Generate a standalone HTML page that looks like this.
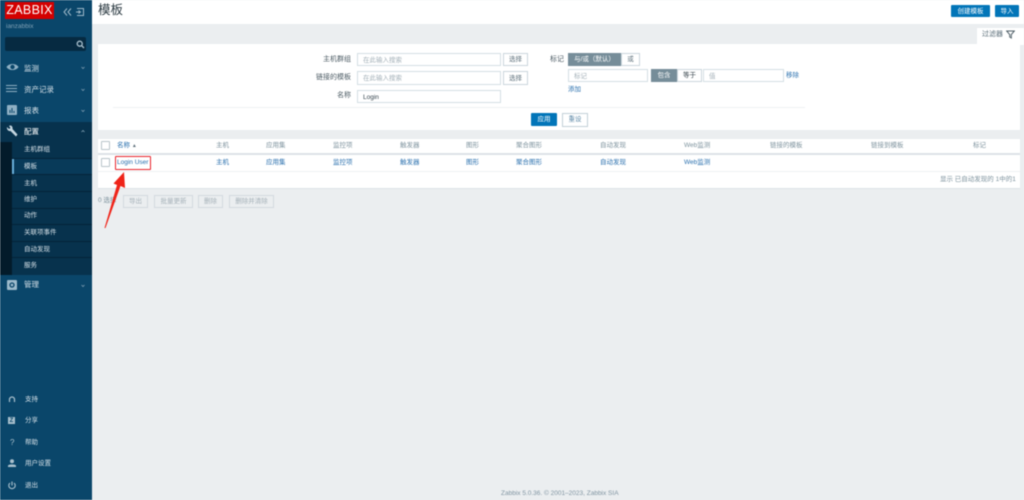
<!DOCTYPE html>
<html lang="zh"><head><meta charset="utf-8"><title>模板</title>
<style>
html,body{margin:0;padding:0}
body{width:1024px;height:500px;position:relative;overflow:hidden;background:#ebeef0;font-family:"Liberation Sans","Noto Sans CJK SC",sans-serif;font-size:7px;color:#1f2c33}
#r{position:absolute;inset:0;filter:blur(.4px)}
#r div,#r svg,#r span.a{position:absolute}
.t{white-space:nowrap;line-height:10px;margin-top:1px}
.w{color:#d5e0e7;font-size:6.5px}
.m{font-size:7.5px}
.l{color:#2a70ae}
.g{color:#7d929d}
.i{background:#fff;border:1px solid #d5dfe4;box-sizing:border-box;color:#a3b0b8;padding-left:5px;line-height:13px;font-size:6.5px;white-space:nowrap}
.b{background:#fff;border:1px solid #cbd6dc;box-sizing:border-box;text-align:center;color:#5c6f7a;font-size:6.5px;white-space:nowrap}
.d{background:#ebeef0;border:1px solid #d3dadf;box-sizing:border-box;text-align:center;color:#a5b1b8;font-size:6.5px;line-height:12px;white-space:nowrap}
.p{background:#0275b8;color:#fff;text-align:center;font-size:6.5px;line-height:13px;border-radius:1px;white-space:nowrap}
.c{background:#fff;border:1px solid #b9c4ca;box-sizing:border-box;width:9px;height:9px;border-radius:1px}
</style></head><body><div id="r">

<div style="left:0;top:0;width:92px;height:500px;background:#0a466a"></div>
<div style="left:5px;top:2px;width:49px;height:17px;background:#d40000"></div>
<div class="t" style="left:5px;top:2px;width:49px;height:17px;line-height:17px;text-align:center;color:#fff;font-size:12.5px;letter-spacing:.3px;margin-top:0">ZABBIX</div>
<svg style="left:63px;top:8px" width="9" height="8" fill="none" stroke="#9fb9c9" stroke-width="1"><path d="M4 .5 1 4l3 3.500M8 .5 5 4l3 3.500"/></svg>
<svg style="left:75px;top:7px" width="10" height="10" viewBox="0 0 10 10" fill="none" stroke="#9fb9c9"><path d="M2 1.500h6.500v7H2M1 5h4M3.500 3.500 5.500 5 3.500 6.500"/></svg>
<div class="t" style="left:6px;top:21px;color:#7fa0b5;font-size:6.500px">ianzabbix</div>
<div style="left:5px;top:37px;width:81px;height:14px;background:#062a41;border-radius:2px"></div>
<svg style="left:76px;top:40px" width="9" height="9" viewBox="0 0 9 9" fill="none" stroke="#a9c0cd" stroke-width="1.300"><circle cx="3.700" cy="3.700" r="2.500"/><path d="M5.500 5.500 8 8"/></svg>

<svg style="left:6px;top:62px" width="13" height="10" viewBox="0 0 13 10"><path d="M.5 5C3 1 10 1 12.500 5 10 9 3 9 .5 5Z" fill="#8fb0c4"/><circle cx="6.500" cy="5" r="2.200" fill="#0a466a"/></svg>
<div class="t w m" style="left:24px;top:63px">监测</div>
<svg style="left:6px;top:84px" width="11" height="9" viewBox="0 0 11 9" stroke="#8fb0c4"><path d="M0 1.500h11M0 4.500h11M0 7.500h11"/></svg>
<div class="t w m" style="left:24px;top:84px">资产记录</div>
<div style="left:7px;top:105px;width:10px;height:10px;background:#8fb0c4;border-radius:1px"></div>
<svg style="left:7px;top:105px" width="10" height="10" stroke="#0a466a"><path d="M3 8V5M5 8V3M7 8V6"/></svg>
<div class="t w m" style="left:24px;top:105px">报表</div>
<div style="left:0;top:122px;width:92px;height:20px;background:#07324d"></div>
<svg style="left:6px;top:125px" width="12" height="12" viewBox="0 0 12 12"><path d="M1 2 3 4 4.500 3 3 1C5-.5 7 1.500 6.500 4L11.500 9.500 10 11.500 4.500 6C2.500 6.500.5 4.500 1 2Z" fill="#c5d6e0"/></svg>
<div class="t m" style="left:24px;top:126px;color:#fff">配置</div>
<div style="left:0;top:142px;width:12px;height:133px;background:#031b2a"></div>
<div style="left:12px;top:142px;width:80px;height:133px;background:#07324d"></div>
<div style="left:13px;top:158px;width:79px;height:16px;background:#083a59"></div>
<div style="left:12px;top:158px;width:1.500px;height:16px;background:#69b0dc"></div>
<div style="left:12px;top:158px;width:80px;height:.7px;background:#042338"></div>
<div style="left:12px;top:174px;width:80px;height:.7px;background:#042338"></div>
<div style="left:12px;top:191px;width:80px;height:.7px;background:#042338"></div>
<div style="left:12px;top:208px;width:80px;height:.7px;background:#042338"></div>
<div style="left:12px;top:224px;width:80px;height:.7px;background:#042338"></div>
<div style="left:12px;top:241px;width:80px;height:.7px;background:#042338"></div>
<div style="left:12px;top:257px;width:80px;height:.7px;background:#042338"></div>
<div class="t w" style="left:24px;top:144px">主机群组</div>
<div class="t w" style="left:24px;top:161px">模板</div>
<div class="t w" style="left:24px;top:178px">主机</div>
<div class="t w" style="left:24px;top:194px">维护</div>
<div class="t w" style="left:24px;top:210px">动作</div>
<div class="t w" style="left:24px;top:227px">关联项事件</div>
<div class="t w" style="left:24px;top:244px">自动发现</div>
<div class="t w" style="left:24px;top:260px">服务</div>
<div style="left:7px;top:280px;width:10px;height:10px;background:#9cbacb;border-radius:1px"></div>
<svg style="left:7px;top:280px" width="10" height="10"><circle cx="5" cy="5" r="2" fill="none" stroke="#0a466a" stroke-width="1.300"/></svg>
<div class="t w m" style="left:24px;top:279px">管理</div>
<svg style="left:80px;top:65px" width="7" height="230" fill="none" stroke="#7d9db1" stroke-width=".8"><path d="M1.500 2 3 3.500 4.500 2M1.500 24 3 25.500 4.500 24M1.500 45 3 46.500 4.500 45M1.500 67 3 65.500 4.500 67M1.500 220 3 221.500 4.500 220"/></svg>

<svg style="left:8px;top:396px" width="8" height="9" fill="none" stroke="#a9c0cd" stroke-width="1.200"><path d="M1.500 6V3.500a2.500 2.500 0 0 1 5 0V6"/></svg>
<div class="t w" style="left:25px;top:394px">支持</div>
<div style="left:8px;top:417px;width:7px;height:7px;background:#a9c0cd"></div>
<div class="t" style="left:8px;top:415px;width:7px;text-align:center;color:#0a466a;font-size:6px;font-weight:bold">Z</div>
<div class="t w" style="left:25px;top:415px">分享</div>
<div class="t" style="left:10px;top:437px;color:#a9c0cd;font-size:8px">?</div>
<div class="t w" style="left:25px;top:437px">帮助</div>
<svg style="left:8px;top:459px" width="8" height="8" fill="#a9c0cd"><circle cx="4" cy="2.200" r="2"/><path d="M0 8V6.500C1 5 7 5 8 6.500V8Z"/></svg>
<div class="t w" style="left:25px;top:458px">用户设置</div>
<svg style="left:8px;top:481px" width="8" height="9" fill="none" stroke="#a9c0cd" stroke-width="1.100"><path d="M4 .5V4.500M2 2A3.200 3.200 0 1 0 6 2"/></svg>
<div class="t w" style="left:25px;top:480px">退出</div>

<div style="left:92px;top:0;width:932px;height:24px;background:#fff"></div>
<div class="t" style="left:98px;top:2px;font-size:12.500px;line-height:16px;color:#2b3a42;margin-top:0">模板</div>
<div class="p" style="left:951px;top:5px;width:39px;height:12px">创建模板</div>
<div class="p" style="left:995px;top:5px;width:24px;height:12px">导入</div>

<div style="left:977px;top:28px;width:47px;height:17px;background:#fff"></div>
<div class="t" style="left:982px;top:29px;color:#5c6f7a">过滤器</div>
<svg style="left:1006px;top:30px" width="9" height="9" fill="none" stroke="#4f5f68" stroke-width="1"><path d="M.7 1H8.300L5.300 4.500V8L3.700 7V4.500Z"/></svg>

<div style="left:98px;top:44px;width:922px;height:86px;background:#fff"></div>
<div class="t g" style="left:300px;top:54px;width:51px;text-align:right;color:#4c5b64">主机群组</div>
<div class="i" style="left:357px;top:53px;width:144px;height:13px">在此输入搜索</div>
<div class="b" style="left:503px;top:53px;width:25px;height:13px;line-height:12px">选择</div>
<div class="t g" style="left:300px;top:72px;width:51px;text-align:right;color:#4c5b64">链接的模板</div>
<div class="i" style="left:357px;top:71px;width:144px;height:14px">在此输入搜索</div>
<div class="b" style="left:503px;top:71px;width:25px;height:14px;line-height:13px">选择</div>
<div class="t g" style="left:300px;top:90px;width:51px;text-align:right;color:#4c5b64">名称</div>
<div class="i" style="left:357px;top:90px;width:144px;height:13px;color:#384750">Login</div>

<div class="t" style="left:550px;top:54px;color:#4c5b64">标记</div>
<div style="left:568px;top:53px;width:53px;height:13px;background:#768d99;color:#fff;text-align:center;line-height:13px;font-size:6.500px">与/或（默认）</div>
<div class="b" style="left:621px;top:53px;width:19px;height:13px;line-height:12px">或</div>
<div class="i" style="left:568px;top:69px;width:80px;height:13px">标记</div>
<div style="left:651px;top:69px;width:26px;height:13px;background:#768d99;color:#fff;text-align:center;line-height:13px;font-size:6.500px">包含</div>
<div class="b" style="left:677px;top:69px;width:25px;height:13px;line-height:11px;color:#2e3c44">等于</div>
<div class="i" style="left:703px;top:69px;width:81px;height:13px">值</div>
<div class="t l" style="left:786px;top:70px;font-size:6.500px">移除</div>
<div class="t l" style="left:568px;top:84px;font-size:6.500px">添加</div>
<div style="left:113px;top:107px;width:692px;height:1px;background:#eef1f3"></div>
<div class="p" style="left:531px;top:113px;width:26px;height:13px;line-height:13px">应用</div>
<div class="b" style="left:562px;top:113px;width:26px;height:14px;line-height:12px;border-color:#c3d0d8;color:#5f8aa8">重设</div>

<div style="left:98px;top:139px;width:922px;height:50px;background:#fff"></div>
<div style="left:98px;top:153px;width:922px;height:1.500px;background:#dde3e7"></div>
<div style="left:98px;top:171px;width:922px;height:1px;background:#eef1f3"></div>
<div style="left:98px;top:188px;width:922px;height:1px;background:#dde3e7"></div>
<div class="c" style="left:101px;top:141px"></div>
<div class="c" style="left:101px;top:158px"></div>
<div class="t l" style="left:117px;top:140px;font-size:6.500px">名称 <span style="color:#5c6f7a;font-size:5px">▲</span></div>
<div class="t g" style="left:216px;top:140px;font-size:6.500px">主机</div>
<div class="t g" style="left:266px;top:140px;font-size:6.500px">应用集</div>
<div class="t g" style="left:333px;top:140px;font-size:6.500px">监控项</div>
<div class="t g" style="left:400px;top:140px;font-size:6.500px">触发器</div>
<div class="t g" style="left:466px;top:140px;font-size:6.500px">图形</div>
<div class="t g" style="left:516px;top:140px;font-size:6.500px">聚合图形</div>
<div class="t g" style="left:600px;top:140px;font-size:6.500px">自动发现</div>
<div class="t g" style="left:684px;top:140px;font-size:6.500px">Web监测</div>
<div class="t g" style="left:770px;top:140px;font-size:6.500px">链接的模板</div>
<div class="t g" style="left:871px;top:140px;font-size:6.500px">链接到模板</div>
<div class="t g" style="left:973px;top:140px;font-size:6.500px">标记</div>

<div class="t l" style="left:117px;top:157px;font-size:6.500px">Login User</div>
<div style="left:115px;top:156px;width:36px;height:14px;border:1.300px solid #e8232c;border-radius:1px;box-sizing:border-box"></div>
<div class="t l" style="left:216px;top:157px;font-size:6.500px">主机</div>
<div class="t l" style="left:266px;top:157px;font-size:6.500px">应用集</div>
<div class="t l" style="left:333px;top:157px;font-size:6.500px">监控项</div>
<div class="t l" style="left:400px;top:157px;font-size:6.500px">触发器</div>
<div class="t l" style="left:466px;top:157px;font-size:6.500px">图形</div>
<div class="t l" style="left:516px;top:157px;font-size:6.500px">聚合图形</div>
<div class="t l" style="left:600px;top:157px;font-size:6.500px">自动发现</div>
<div class="t l" style="left:684px;top:157px;font-size:6.500px">Web监测</div>
<div class="t g" style="left:940px;top:174px;font-size:6.500px">显示 已自动发现的 1中的1</div>

<svg style="left:100px;top:168px;z-index:3" width="30" height="62" viewBox="0 0 30 62"><path d="M4.500 60 17 17 13.500 15.500 24 4 25 20 20.500 18 5.500 60Z" fill="#ef2419"/></svg>

<div class="t g" style="left:98px;top:195px;font-size:6.500px">0 选择</div>
<div class="d" style="left:123px;top:195px;width:25px;height:13px">导出</div>
<div class="d" style="left:154px;top:195px;width:39px;height:13px">批量更新</div>
<div class="d" style="left:198px;top:195px;width:25px;height:13px">删除</div>
<div class="d" style="left:229px;top:195px;width:45px;height:13px">删除并清除</div>

<div class="t" style="left:501px;top:488px;color:#8195a2;font-size:6.500px">Zabbix 5.0.36. © 2001–2023, Zabbix SIA</div>
</div></body></html>
